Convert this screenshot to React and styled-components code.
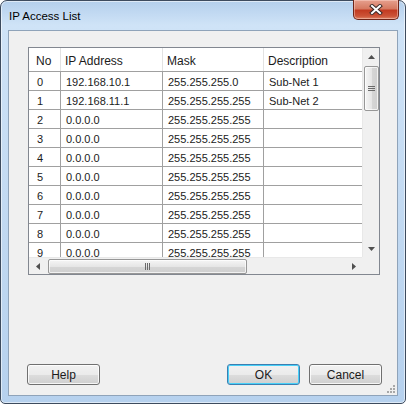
import React from "react";
import styled, { createGlobalStyle } from "styled-components";

const GlobalStyle = createGlobalStyle`
  html, body { margin: 0; padding: 0; background: #ffffff; }
  body { font-family: "Liberation Sans", Arial, sans-serif; color: #1b1b1b; }
  * { box-sizing: border-box; }
`;

const Window = styled.div`
  position: relative;
  width: 406px;
  height: 404px;
  border: 1px solid #3d4b5e;
  border-radius: 7px 7px 5px 5px;
  background: linear-gradient(180deg, #b4cfec 0px, #cfe3f7 24px, #c0d8f1 60%, #b6d1ee 100%);
  box-shadow: inset 0 0 0 1px rgba(255, 255, 255, 0.55);
  display: flex;
  flex-direction: column;
`;

const TitleBar = styled.div`
  height: 29px;
  display: flex;
  align-items: center;
  padding-left: 8px;
  font-size: 11.5px;
  color: #000;
`;

const CloseButton = styled.div`
  position: absolute;
  top: -1px;
  right: 6px;
  width: 46px;
  height: 20px;
  border: 1px solid #6e2418;
  border-top: none;
  border-radius: 0 0 5px 5px;
  background: linear-gradient(180deg, #e6a08e 0%, #d67a62 45%, #c23b22 55%, #cc5438 85%, #de8466 100%);
  box-shadow: inset 0 0 0 1px rgba(255, 220, 210, 0.45);
  display: flex;
  align-items: center;
  justify-content: center;
`;

const Client = styled.div`
  position: relative;
  flex: 1;
  margin: 0 7px 7px 7px;
  background: #f0f0f0;
  border: 1px solid #8fa3b9;
  padding: 16px 16px 10px 19px;
  display: flex;
  flex-direction: column;
`;

const Grid = styled.div`
  width: 352px;
  height: 228px;
  border: 1px solid #828790;
  background: #ffffff;
  display: grid;
  grid-template-columns: 333px 17px;
  grid-template-rows: 209px 17px;
`;

const Body = styled.div`
  overflow: hidden;
`;

const Row = styled.div`
  display: grid;
  grid-template-columns: 32px 102px 101px 98px;
  height: ${(p) => (p.$header ? 24 : 19)}px;
  border-bottom: 1px solid #a0a0a0;
  font-size: ${(p) => (p.$header ? 12 : 11)}px;
`;

const Cell = styled.div`
  display: flex;
  align-items: center;
  padding-left: ${(p) => p.$pad}px;
  padding-top: 2px;
  border-right: ${(p) => (p.$last ? "none" : p.$header ? "1px solid #e2e2e2" : "1px solid #a0a0a0")};
  white-space: nowrap;
  overflow: hidden;
`;

const VScroll = styled.div`
  background: #f0f0f0;
  border-left: 1px solid #e8e8e8;
  display: flex;
  flex-direction: column;
  align-items: center;
`;

const HScroll = styled.div`
  background: #f0f0f0;
  border-top: 1px solid #e8e8e8;
  display: flex;
  align-items: center;
`;

const Corner = styled.div`
  background: #f0f0f0;
`;

const ArrowBox = styled.div`
  width: 17px;
  height: 17px;
  flex: none;
  display: flex;
  align-items: center;
  justify-content: center;
`;

const Track = styled.div`
  flex: 1;
  display: flex;
  flex-direction: ${(p) => (p.$vertical ? "column" : "row")};
  align-items: center;
`;

const Thumb = styled.div`
  border: 1px solid #979797;
  border-radius: 2px;
  display: flex;
  align-items: center;
  justify-content: center;
  width: ${(p) => (p.$vertical ? "15px" : "199px")};
  height: ${(p) => (p.$vertical ? "45px" : "15px")};
  margin: ${(p) => (p.$vertical ? "1px 0 0 0" : "0 0 0 2px")};
  background: ${(p) =>
    p.$vertical
      ? "linear-gradient(90deg, #f5f5f5 0%, #e6e6e6 50%, #d6d6d6 51%, #cfcfcf 100%)"
      : "linear-gradient(180deg, #f5f5f5 0%, #e6e6e6 50%, #d6d6d6 51%, #cfcfcf 100%)"};
  box-shadow: inset 0 0 0 1px rgba(255, 255, 255, 0.7);
`;

const Spacer = styled.div`
  flex: 1;
`;

const ButtonRow = styled.div`
  display: flex;
  align-items: center;
  gap: 9px;
  margin: 0 -1px;
`;

const Button = styled.button`
  width: 73px;
  height: 21px;
  padding: 0;
  font-family: "Liberation Sans", Arial, sans-serif;
  font-size: 12px;
  color: #1b1b1b;
  border-radius: 3px;
  border: 1px solid ${(p) => (p.$default ? "#3c7fb1" : "#707070")};
  background: linear-gradient(180deg, #f2f2f2 0%, #ebebeb 50%, #dddddd 51%, #cfcfcf 100%);
  box-shadow: inset 0 0 0 1px ${(p) => (p.$default ? "#48d0f8" : "rgba(255,255,255,0.8)")};
  margin-left: ${(p) => (p.$push ? "auto" : "0")};
`;

const Grip = styled.svg`
  position: absolute;
  right: 1px;
  bottom: 1px;
`;

const rows = [
  ["0", "192.168.10.1", "255.255.255.0", "Sub-Net 1"],
  ["1", "192.168.11.1", "255.255.255.255", "Sub-Net 2"],
  ...Array.from({ length: 8 }, (_, i) => [String(i + 2), "0.0.0.0", "255.255.255.255", ""]),
];

const pads = [8, 5, 5, 5];

function Arrow({ dir }) {
  const shapes = {
    up: "0,4 3.5,0 7,4",
    down: "0,0 7,0 3.5,4",
    left: "4,0 4,7 0,3.5",
    right: "0,0 4,3.5 0,7",
  };
  const vertical = dir === "up" || dir === "down";
  return (
    <svg width={vertical ? 7 : 4} height={vertical ? 4 : 7}>
      <polygon points={shapes[dir]} fill="#505050" />
    </svg>
  );
}

function GripLines({ vertical }) {
  return vertical ? (
    <svg width="7" height="5">
      <rect x="0" y="0" width="7" height="1" fill="#6a6a6a" />
      <rect x="0" y="2" width="7" height="1" fill="#6a6a6a" />
      <rect x="0" y="4" width="7" height="1" fill="#6a6a6a" />
    </svg>
  ) : (
    <svg width="5" height="7">
      <rect x="0" y="0" width="1" height="7" fill="#6a6a6a" />
      <rect x="2" y="0" width="1" height="7" fill="#6a6a6a" />
      <rect x="4" y="0" width="1" height="7" fill="#6a6a6a" />
    </svg>
  );
}

export default function App() {
  return (
    <>
      <GlobalStyle />
      <Window>
        <TitleBar>IP Access List</TitleBar>
        <CloseButton>
          <svg width="14" height="11" viewBox="0 0 14 11">
            <path d="M3 2 L11 9 M11 2 L3 9" stroke="#3a2a28" strokeWidth="4" strokeLinecap="square" />
            <path d="M3 2 L11 9 M11 2 L3 9" stroke="#ffffff" strokeWidth="2" strokeLinecap="square" />
          </svg>
        </CloseButton>
        <Client>
          <Grid>
            <Body>
              <Row $header>
                {["No", "IP Address", "Mask", "Description"].map((h, i) => (
                  <Cell key={h} $header $pad={pads[i] - 1} $last={i === 3}>
                    {h}
                  </Cell>
                ))}
              </Row>
              {rows.map((r) => (
                <Row key={r[0]}>
                  {r.map((c, i) => (
                    <Cell key={i} $pad={pads[i]} $last={i === 3}>
                      {c}
                    </Cell>
                  ))}
                </Row>
              ))}
            </Body>
            <VScroll>
              <ArrowBox>
                <Arrow dir="up" />
              </ArrowBox>
              <Track $vertical>
                <Thumb $vertical>
                  <GripLines vertical />
                </Thumb>
              </Track>
              <ArrowBox>
                <Arrow dir="down" />
              </ArrowBox>
            </VScroll>
            <HScroll>
              <ArrowBox>
                <Arrow dir="left" />
              </ArrowBox>
              <Track>
                <Thumb>
                  <GripLines />
                </Thumb>
              </Track>
              <ArrowBox>
                <Arrow dir="right" />
              </ArrowBox>
            </HScroll>
            <Corner />
          </Grid>
          <Spacer />
          <ButtonRow>
            <Button>Help</Button>
            <Button $default $push>
              OK
            </Button>
            <Button>Cancel</Button>
          </ButtonRow>
          <Grip width="10" height="10">
            {[
              [8, 2],
              [8, 5],
              [5, 5],
              [8, 8],
              [5, 8],
              [2, 8],
            ].map(([x, y]) => (
              <rect key={`${x}-${y}`} x={x - 1} y={y - 1} width="2" height="2" fill="#a8a8a8" />
            ))}
          </Grip>
        </Client>
      </Window>
    </>
  );
}
